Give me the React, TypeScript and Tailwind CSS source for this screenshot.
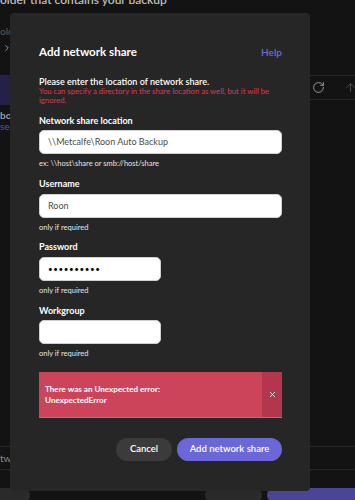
import { RotateCw, ArrowUp, ChevronRight, X } from 'lucide-react';

// Dimmed page underneath the dialog — only slivers of it show around the edges.
function BackgroundPage() {
  return (
    <div className="flex h-full flex-col bg-[#131313]">
      <div className="-mt-[9px] h-[18px] text-[12px] font-semibold leading-[18px] text-[#bdbdbd]">
        older that contains your backup
      </div>
      <div className="mt-[15px] h-[14px] text-[10px] leading-[14px] text-[#5c5c5c]">
        older
      </div>
      <div className="mt-[3px] flex h-[14px] items-center pl-[2px] text-[#b5b5b5]">
        <ChevronRight size={10} strokeWidth={2} />
      </div>
      <div className="mt-[20px] flex flex-1">
        <div className="flex w-[150px] flex-col">
          <div className="h-[30px] bg-[#23214a]" />
          <div className="mt-[4px] text-[10px] font-semibold leading-[12px] text-[#a8a8a8]">
            bo:
          </div>
          <div className="text-[10px] leading-[10px] text-[#5753a8]">sec</div>
        </div>
        <div className="flex flex-1 flex-col">
          <div className="flex h-[25px] items-center justify-end gap-[19px] border-y border-[#272727] text-[#9a9a9a]">
            <RotateCw size={13} strokeWidth={1.8} />
            <ArrowUp size={13} strokeWidth={1.6} className="-mr-[2px] text-[#555]" />
          </div>
        </div>
      </div>
      <div className="flex h-[24px] items-center border-y border-[#262626] text-[10px] text-[#8a8a8a]">
        two
      </div>
      <div className="mt-[18px] flex h-[12px] items-start">
        <div className="h-[14px] w-[30px] rounded-r-full bg-[#2a2a2a]" />
        <div className="flex-1" />
        <div className="h-[14px] w-[57px] rounded-full bg-[#2a2a2a]" />
        <div className="ml-[5px] h-[14px] w-[88px] rounded-l-full bg-[#4a4596]" />
      </div>
    </div>
  );
}

function FieldLabel({ children }: { children: React.ReactNode }) {
  return (
    <div className="text-[9px] font-bold leading-[14px] text-white">
      {children}
    </div>
  );
}

function Hint({ children }: { children: React.ReactNode }) {
  return (
    <div className="text-[7.5px] leading-[11px] text-[#e5e5e5]">{children}</div>
  );
}

function TextBox({
  value,
  width,
  className,
}: {
  value?: string;
  width: string;
  className?: string;
}) {
  return (
    <div
      className={`flex h-[24px] items-center rounded-[5px] border border-[#cfcfcf] bg-white pl-[8px] ${width}`}
    >
      <span className={className}>{value}</span>
    </div>
  );
}

export default function App() {
  return (
    <div
      className="relative h-[500px] w-[355px] overflow-hidden bg-[#131313]"
      style={{ fontFamily: 'Lato, "Open Sans", sans-serif' }}
    >
      <BackgroundPage />

      {/* the dialog sits over the page */}
      <div className="absolute left-[10px] top-[13px] flex h-[478px] w-[300px] flex-col rounded-[4px] bg-[#262626] pl-[29px] pr-[28px] pt-[30px]">
        <div className="flex h-[18px] items-center justify-between">
          <span className="text-[11.6px] font-bold text-white">
            Add network share
          </span>
          <span className="text-[10px] font-semibold text-[#6d69d8]">Help</span>
        </div>

        <div className="mt-[15px] text-[9px] font-semibold leading-[12px] text-white">
          Please enter the location of network share.
        </div>
        <div className="-mt-[1px] text-[7.7px] leading-[9px] text-[#d63c56]">
          You can specify a directory in the share location as well, but it
          will be ignored.
        </div>

        <div className="mt-[9px]">
          <FieldLabel>Network share location</FieldLabel>
        </div>
        <div className="mt-[2px]">
          <TextBox
            width="w-full"
            value={'\\\\Metcalfe\\Roon Auto Backup'}
            className="text-[9px] text-[#4b4b4b]"
          />
        </div>
        <div className="mt-[4px]">
          <Hint>ex: \\host\share or smb://host/share</Hint>
        </div>

        <div className="mt-[8px]">
          <FieldLabel>Username</FieldLabel>
        </div>
        <div className="mt-[3px]">
          <TextBox width="w-full" value="Roon" className="text-[9px] text-[#4b4b4b]" />
        </div>
        <div className="mt-[4px]">
          <Hint>only if required</Hint>
        </div>

        <div className="mt-[7px]">
          <FieldLabel>Password</FieldLabel>
        </div>
        <div className="mt-[3px]">
          <TextBox
            width="w-[122px]"
            value="••••••••••"
            className="text-[8px] tracking-[0.6px] text-black"
          />
        </div>
        <div className="mt-[4px]">
          <Hint>only if required</Hint>
        </div>

        <div className="mt-[8px]">
          <FieldLabel>Workgroup</FieldLabel>
        </div>
        <div className="mt-[2px]">
          <TextBox width="w-[122px]" />
        </div>
        <div className="mt-[4px]">
          <Hint>only if required</Hint>
        </div>

        <div className="mt-[13px] flex h-[46px] border-b border-[#e25a6e] bg-[#cc445a]">
          <div className="flex flex-1 items-center pl-[6px] text-[8.1px] font-bold leading-[11px] text-white">
            There was an Unexpected error:
            <br />
            UnexpectedError
          </div>
          <div className="flex w-[20px] items-center justify-center bg-[#b3364c] text-white">
            <X size={9} strokeWidth={2.2} />
          </div>
        </div>

        <div className="mt-[20px] flex justify-end gap-[5px]">
          <button
            type="button"
            className="h-[23px] w-[56px] rounded-full bg-[#3b3b3b] text-[9.5px] font-semibold text-white"
          >
            Cancel
          </button>
          <button
            type="button"
            className="h-[23px] w-[105px] rounded-full bg-[#6c67d9] text-[9.5px] font-semibold text-white"
          >
            Add network share
          </button>
        </div>
      </div>
    </div>
  );
}
